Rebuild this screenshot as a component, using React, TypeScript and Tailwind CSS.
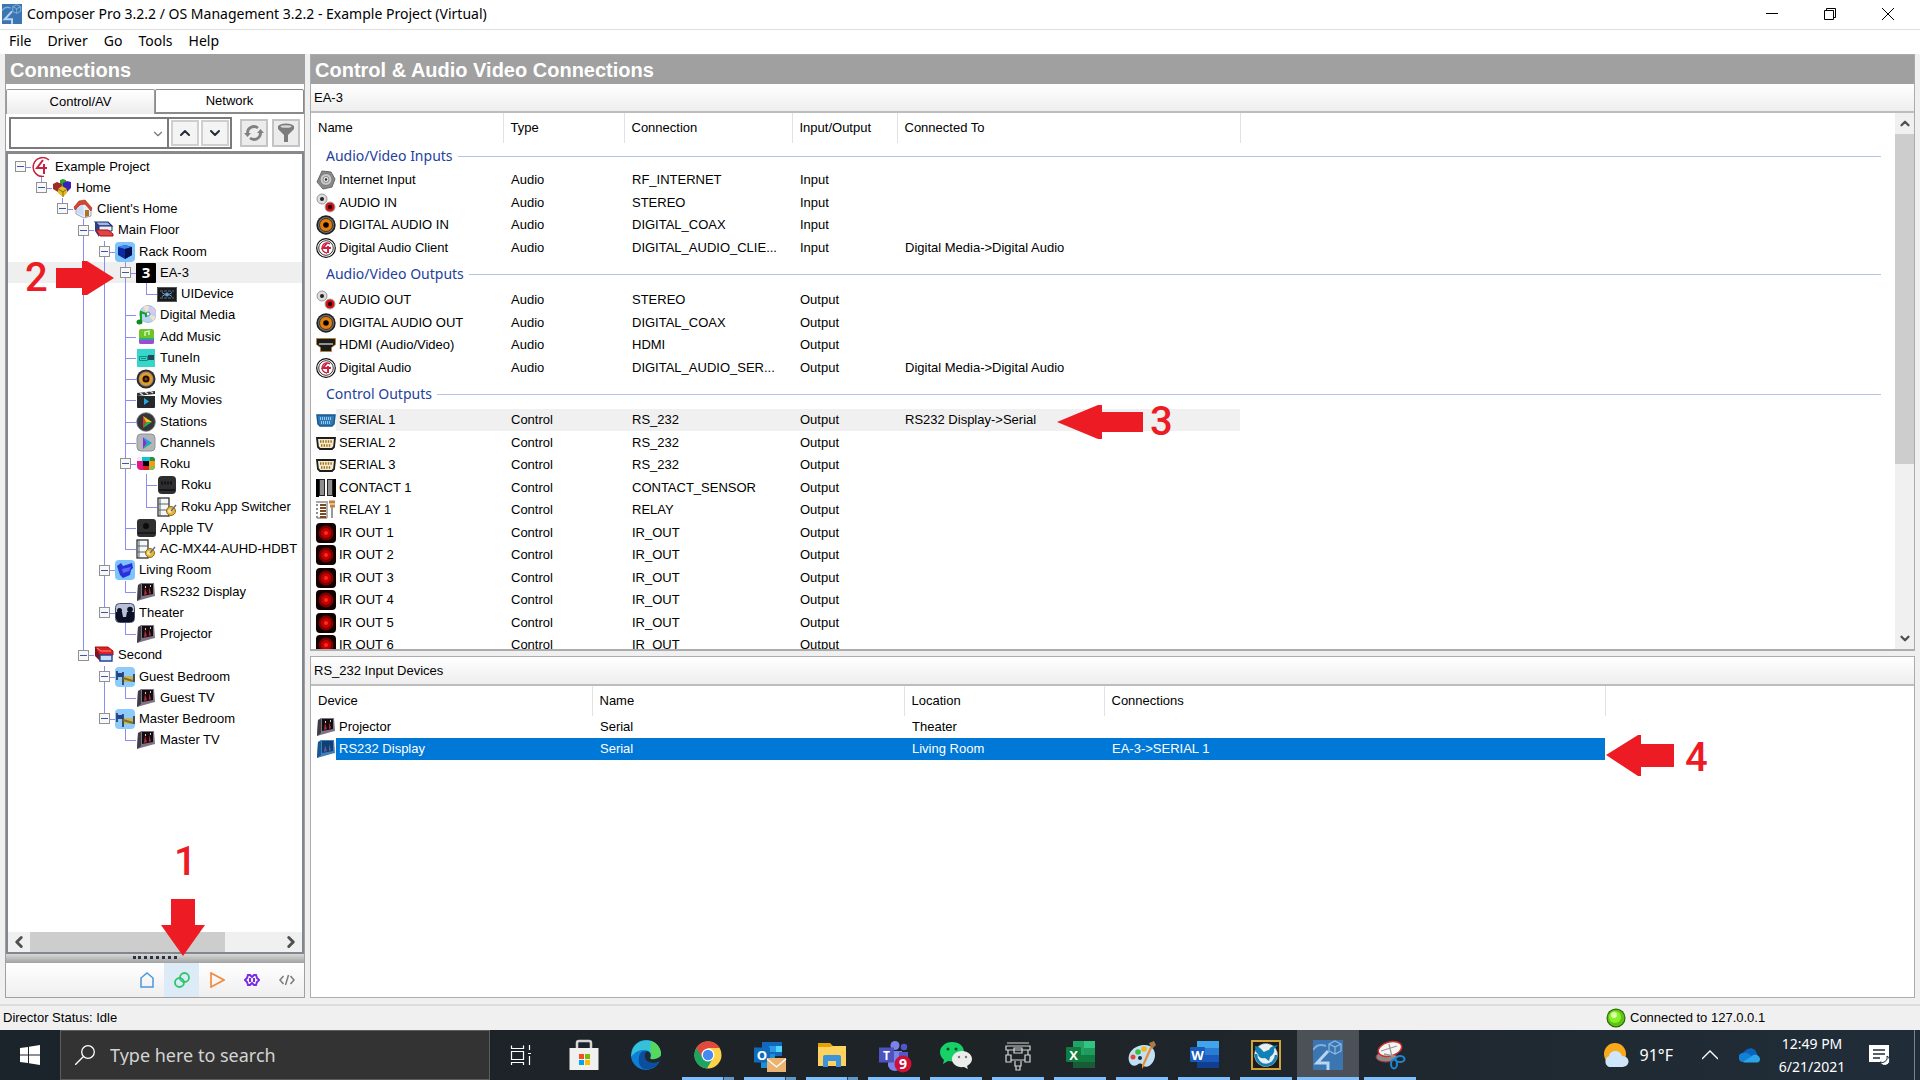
import { useState } from 'react';
import type { ReactNode } from 'react';
import { ChevronDown, ChevronLeft, ChevronRight, ChevronUp } from 'lucide-react';
import clsx from 'clsx';

const icons: Record<string, ReactNode> = {
  control4: (
    <>
      <path d="M18 3A9.500 9.500 0 1 0 13 19.500" fill="none" stroke="#c8213f" strokeWidth="1.500" />
      <path d="M12 3 6 11h7v6M13 7v4h3" fill="none" stroke="#c8213f" strokeWidth="2" />
    </>
  ),
  home: (
    <>
      <path d="m8 2 3-1 3 1v6l-3 2-3-2z" fill="#2f9e2f" />
      <path d="m1 6 4-2 5 2v6l-4 2-5-3z" fill="#9c2b2b" />
      <path d="m11 5 4-2 4 1v6l-4 4-4-3z" fill="#3b20b8" />
      <path d="m6 11 4-3 5 3v4l-4 4-5-4z" fill="#e2bd25" />
      <path d="m6 11 5 3 4-3M11 14v5" fill="none" stroke="#8d6b11" />
    </>
  ),
  house: (
    <>
      <path d="m3 9 6-6 9 7v7l-7 2-8-4z" fill="#e9eef5" stroke="#8a8fa3" strokeWidth=".8" />
      <path d="M1 8 6 2l6-1 7 8-1 3-6-7-5 1-5 5z" fill="#d8452f" stroke="#9b2a1d" strokeWidth=".6" />
      <path d="M4 9l6-3 1 11-7-3z" fill="#c9dcf3" />
      <path d="M12 11h4v6l-4 1z" fill="#b0702c" />
    </>
  ),
  floor: (
    <>
      <path d="M1 2h13l4 4H5z" fill="#9db8e6" stroke="#1c2b66" strokeWidth="1.200" />
      <path d="M5 6h13v5H5z" fill="#e9eefb" stroke="#1c2b66" />
      <path d="M1 2v9l4 6V6z" fill="#2c3f86" />
      <path d="M2 10h12l5 4v2H6z" fill="#e04545" stroke="#a11" />
    </>
  ),
  second: (
    <>
      <path d="M1 2h13l5 4v4H6z" fill="#e02020" stroke="#a11" />
      <path d="m3 3 4 3h10" fill="none" stroke="#ff8d8d" />
      <path d="M1 2v9l5 5v-6z" fill="#7d1424" />
      <path d="M6 10h12v6H6z" fill="#c7dcf5" stroke="#24439a" strokeWidth="1.400" />
    </>
  ),
  rack: (
    <>
      <rect width="20" height="20" rx="4" fill="#7cc4fb" />
      <path d="m3 5 7-2 7 2v8l-7 4-7-4z" fill="#0c2a9e" />
      <path d="m3 5 7 2 7-2-7-2z" fill="#3e82f0" />
      <path d="M10 7v10l7-4V5z" fill="#051150" />
    </>
  ),
  ea3: (
    <>
      <rect width="20" height="20" rx="1" fill="#000" />
      <text x="10" y="15" fontSize="15" fontWeight="700" fill="#fff" textAnchor="middle" fontFamily="Open Sans, sans-serif">3</text>
    </>
  ),
  uidevice: (
    <>
      <rect x=".5" y="3.500" width="19" height="14" fill="#1a1a1c" stroke="#555" />
      <path d="M3 7h14M3 14h14" stroke="#456" strokeWidth="1.500" strokeDasharray="3 1" />
      <path d="M5 8.500 8 10.500 5 12.500M15 8.500 12 10.500l3 2" fill="none" stroke="#68a2d8" />
      <circle cx="10" cy="10.500" r="2" fill="#68a2d8" />
    </>
  ),
  media: (
    <>
      <circle cx="12" cy="9" r="8.500" fill="#b9d4f0" stroke="#8da7c4" strokeWidth=".7" />
      <path d="M12 9 7 2a8 8 0 0 1 6-1zM12 9l8 3-3 4z" fill="#f4e2c9" />
      <path d="M12 9 20 7l-3-5z" fill="#e5c5f0" />
      <circle cx="12" cy="9" r="2" fill="#fff" stroke="#58a" />
      <path d="M5 16V7l5 2v3" fill="none" stroke="#17a02a" strokeWidth="2" />
      <ellipse cx="3.500" cy="17" rx="3" ry="2.500" fill="#0d8a1e" />
    </>
  ),
  addmusic: (
    <>
      <rect x="3" y="2" width="15" height="15" rx="2" fill="#6cc62b" />
      <path d="M3 11h15v2H3z" fill="#2fa59a" />
      <path d="M3 13h15v2a2 2 0 0 1-2 2H5a2 2 0 0 1-2-2z" fill="#9a4fd0" />
      <path d="M9 9V5l4-1v4" fill="none" stroke="#eaffd8" strokeWidth="1.200" />
    </>
  ),
  tunein: (
    <>
      <rect x="1" y="1" width="18" height="18" fill="#36d6cb" />
      <path d="M3.500 8.500h8v4h-8z" fill="none" stroke="#178b87" />
      <path d="M12 7h6v5h-6z" fill="#234b55" />
      <path d="M5 10.500h5" stroke="#178b87" />
    </>
  ),
  speaker: (
    <>
      <circle cx="10" cy="10" r="9.500" fill="#2d2a28" />
      <circle cx="10" cy="10" r="7.500" fill="#8b8680" />
      <circle cx="10" cy="10" r="6.500" fill="#e59a25" />
      <circle cx="10" cy="10" r="3.500" fill="#1d1006" />
      <circle cx="10" cy="10" r="1.500" fill="#6b4a22" />
    </>
  ),
  movies: (
    <>
      <path d="M1 6h18v11a1 1 0 0 1-1 1H2a1 1 0 0 1-1-1z" fill="#26292b" />
      <path d="m1 3 18-2v3L1 6z" fill="#333" />
      <path d="m4 3 3 2m2-3 3 2m2-3 3 2" stroke="#ddd" strokeWidth="1.500" />
      <path d="m8 8 5 3.500L8 15z" fill="#27a7e0" />
    </>
  ),
  stations: (
    <>
      <circle cx="10" cy="10" r="9.300" fill="#33363a" stroke="#777" strokeWidth=".8" />
      <path d="M7 4v12l3-6z" fill="#e8372d" />
      <path d="m7 4 9 6h-6z" fill="#f5c518" />
      <path d="m7 16 9-6h-6z" fill="#27b34a" />
    </>
  ),
  channels: (
    <>
      <rect x="1" y="1" width="18" height="17" rx="4" fill="#b3b5ba" stroke="#909297" />
      <path d="M7 4v12l4-6z" fill="#8430d8" />
      <path d="m7 4 9 6h-5z" fill="#1c9cf0" />
      <path d="m7 16 9-6h-5z" fill="#12b886" />
    </>
  ),
  rokuapp: (
    <>
      <rect x="1" y="3" width="18" height="13" rx="4" fill="#e5188b" />
      <path d="M5 3h9v4H5z" fill="#10c2d6" />
      <path d="M14 3h2a3 3 0 0 1 3 3v1h-5z" fill="#2a8f3f" />
      <path d="M1 7V6a3 3 0 0 1 3-3h2v4z" fill="#f0f0f0" />
      <path d="M7 7h6v5H7z" fill="#000" />
      <path d="M13 7h6v5h-6z" fill="#f39c12" />
      <path d="M7 12h6v4H7z" fill="#e31b23" />
      <path d="M13 12h6a4 4 0 0 1-4 4h-2z" fill="#8ac43f" />
    </>
  ),
  rokubox: (
    <>
      <rect x="1" y="1" width="18" height="18" rx="4" fill="#2e2e30" />
      <path d="M2 15h16" stroke="#161616" strokeWidth="2" />
      <path d="M4 8h12" stroke="#141414" strokeWidth="3" strokeDasharray="2 1" />
    </>
  ),
  appletv: (
    <>
      <rect x="1" y="1" width="19" height="18" rx="3" fill="#303032" />
      <path d="M2 15h17" stroke="#1a1a1a" strokeWidth="2" />
      <circle cx="10" cy="8" r="3" fill="#0c0c0c" />
    </>
  ),
  driver: (
    <>
      <rect x="1" y="1" width="11" height="18" fill="#f5f7fa" stroke="#222" strokeWidth="1.200" />
      <path d="M3 1v18M1 7h11M1 13h11" stroke="#566" />
      <circle cx="14" cy="14" r="4.500" fill="#e3b73a" stroke="#8f6c14" />
      <circle cx="13" cy="14" r="2" fill="#f6e3a4" />
      <path d="m14 14 5-6" stroke="#5d6888" strokeWidth="1.300" />
    </>
  ),
  living: (
    <>
      <rect width="20" height="20" rx="4" fill="#7cc4fb" />
      <path d="m2 6 4-3 2 3 9-3 1 5-2 2-1 5-7 3-3-3z" fill="#2932d8" />
      <path d="m7 9 9-2-2 4-6 2z" fill="#5a6bf7" />
    </>
  ),
  theater: (
    <>
      <rect x=".5" y=".5" width="19" height="19" rx="4" fill="#b9bfd6" stroke="#44506e" />
      <circle cx="4.500" cy="7.500" r="2.500" fill="#0c1024" />
      <circle cx="15" cy="6.500" r="2.800" fill="#0c1024" />
      <path d="M1 16V9h6l1 5h3l1-5h7v8l-2 2H3z" fill="#0c1024" />
    </>
  ),
  bedroom: (
    <>
      <rect width="20" height="20" rx="4" fill="#8ccbfa" />
      <path d="M8 9h10v6H8z" fill="#c6b45c" />
      <path d="M2 4v9M8 5v13M19 7v8" stroke="#26324a" strokeWidth="1.600" />
      <path d="M2 6h6v4H2z" fill="#24408f" />
      <path d="m8 11 10 3" stroke="#7d6f2d" strokeWidth="2" />
    </>
  ),
  display: (
    <>
      <path d="m2 3 3-2h13l1 13-4 1-14 4z" fill="#7d7484" />
      <path d="m2 3 3-1v14l-4 3z" fill="#403b45" />
      <path d="M6 2h11v10L6 14z" fill="#120d10" />
      <path d="m8 13 1-7 2 6zm5-1V5l2 6z" fill="#b32b38" />
      <path d="M9 5h1M14 4h1" stroke="#e8c6b2" strokeWidth="2" />
    </>
  ),
  displaySelected: (
    <>
      <path d="m2 3 3-2h13l1 13-4 1-14 4z" fill="#3f80b8" />
      <path d="m2 3 3-1v14l-4 3z" fill="#1b568f" />
      <path d="M6 2h11v10L6 14z" fill="#0f3f75" />
      <path d="m8 13 1-7 2 6zm5-1V5l2 6z" fill="#5a5f9c" />
    </>
  ),
  internet: (
    <>
      <path d="m6 1 9 1 4 7-3 8-9 2-6-7z" fill="#8b8b8b" stroke="#666" />
      <circle cx="10" cy="9.500" r="6" fill="#c9c9c9" stroke="#777" />
      <circle cx="10" cy="9.500" r="3" fill="#eee" stroke="#888" />
      <circle cx="10" cy="9.500" r="1.200" fill="#222" />
    </>
  ),
  rca: (
    <>
      <circle cx="6" cy="6" r="5" fill="#dcdcdc" stroke="#999" />
      <circle cx="6" cy="6" r="2" fill="#222" />
      <circle cx="14" cy="14" r="5" fill="#d01212" stroke="#aaa" />
      <circle cx="14" cy="14" r="2.200" fill="#300" />
    </>
  ),
  coax: (
    <>
      <circle cx="10" cy="10" r="9.700" fill="#1f1f1f" />
      <circle cx="10" cy="10" r="8" fill="#747474" />
      <circle cx="10" cy="10" r="6.500" fill="#e37f0a" stroke="#432" />
      <circle cx="10" cy="10" r="2.800" fill="#000" />
    </>
  ),
  digital: (
    <>
      <circle cx="10" cy="10" r="9.300" fill="#fff" stroke="#111" strokeWidth="1.200" />
      <circle cx="10" cy="10" r="7.300" fill="#fff" stroke="#222" strokeWidth=".9" />
      <path d="M14 6a5 5 0 1 0-3 9" fill="none" stroke="#cc1f40" strokeWidth="1.300" />
      <path d="m11 5-4 5h5v5M12 8v2h3" fill="none" stroke="#cc1f40" strokeWidth="1.900" />
    </>
  ),
  hdmi: (
    <>
      <path d="M.500 3.500h19v6l-4 3v4h-11v-4l-4-3z" fill="#1b1b1b" stroke="#b4852c" strokeWidth=".8" />
      <path d="M3 9h14" stroke="#bbb" strokeWidth="1.500" />
    </>
  ),
  serialSelected: (
    <>
      <path d="M1 5h18l-1 9-2 2H4l-2-2z" fill="#2b7ab8" stroke="#1a578c" strokeWidth="1.500" />
      <path d="M4 8.500h12M5 12.500h10" stroke="#9cc8ea" strokeWidth="3" strokeDasharray="1 1" />
    </>
  ),
  serial: (
    <>
      <path d="M1 5h18l-1 9-2 2H4l-2-2z" fill="#f4ead2" stroke="#1d1d1d" strokeWidth="1.800" />
      <path d="M4 8.500h12M5 12.500h10" stroke="#a56f13" strokeWidth="2.500" strokeDasharray="1.400 1.200" />
    </>
  ),
  contact: (
    <>
      <path d="M0 1h3v18H0zM17 1h3v18h-3z" fill="#000" />
      <rect x="3.500" y="1.500" width="5" height="16" fill="#8e8e8e" stroke="#222" />
      <rect x="11.500" y="1.500" width="5" height="16" fill="#8e8e8e" stroke="#222" />
    </>
  ),
  relay: (
    <>
      <path d="M0 2h12M1 18h10M11 3v15" stroke="#8f8f8f" strokeWidth="1.400" />
      <path d="M1 4v14" stroke="#8f8f8f" strokeWidth="2" strokeDasharray="2 2" />
      <path d="M7 4v14" stroke="#7c4a21" strokeWidth="6" strokeDasharray="2 1" />
      <path d="M13 2h6M14 6h5" stroke="#c87f3c" strokeWidth="3" />
      <path d="M16 7v11" stroke="#999" strokeWidth="2" />
    </>
  ),
  ir: (
    <>
      <rect width="20" height="20" rx="4" fill="#120000" />
      <circle cx="10" cy="10" r="7.500" fill="#7d0000" />
      <circle cx="10" cy="10" r="5" fill="#c40000" />
      <circle cx="10" cy="10" r="2" fill="#ff2a1c" />
    </>
  ),
};

const Icon = ({ name }: { name: string }) => (
  <svg viewBox="0 0 20 20" className="size-5 shrink-0" aria-hidden="true">
    {icons[name]}
  </svg>
);

interface TreeNode {
  label: string;
  icon: string;
  children?: TreeNode[];
}

const tree: TreeNode = {
  label: 'Example Project',
  icon: 'control4',
  children: [
    {
      label: 'Home',
      icon: 'home',
      children: [
        {
          label: "Client's Home",
          icon: 'house',
          children: [
            {
              label: 'Main Floor',
              icon: 'floor',
              children: [
                {
                  label: 'Rack Room',
                  icon: 'rack',
                  children: [
                    { label: 'EA-3', icon: 'ea3', children: [{ label: 'UIDevice', icon: 'uidevice' }] },
                    { label: 'Digital Media', icon: 'media' },
                    { label: 'Add Music', icon: 'addmusic' },
                    { label: 'TuneIn', icon: 'tunein' },
                    { label: 'My Music', icon: 'speaker' },
                    { label: 'My Movies', icon: 'movies' },
                    { label: 'Stations', icon: 'stations' },
                    { label: 'Channels', icon: 'channels' },
                    {
                      label: 'Roku',
                      icon: 'rokuapp',
                      children: [
                        { label: 'Roku', icon: 'rokubox' },
                        { label: 'Roku App Switcher', icon: 'driver' },
                      ],
                    },
                    { label: 'Apple TV', icon: 'appletv' },
                    { label: 'AC-MX44-AUHD-HDBT', icon: 'driver' },
                  ],
                },
                { label: 'Living Room', icon: 'living', children: [{ label: 'RS232 Display', icon: 'display' }] },
                { label: 'Theater', icon: 'theater', children: [{ label: 'Projector', icon: 'display' }] },
              ],
            },
            {
              label: 'Second',
              icon: 'second',
              children: [
                { label: 'Guest Bedroom', icon: 'bedroom', children: [{ label: 'Guest TV', icon: 'display' }] },
                { label: 'Master Bedroom', icon: 'bedroom', children: [{ label: 'Master TV', icon: 'display' }] },
              ],
            },
          ],
        },
      ],
    },
  ],
};

interface TreeRow {
  node: TreeNode;
  guides: boolean[];
  last: boolean;
}

// guides[i] is true when the ancestor on level i has more siblings below
const flatten = (node: TreeNode, guides: boolean[], last: boolean): TreeRow[] => [
  { node, guides, last },
  ...(node.children ?? []).flatMap((child, i, all) => flatten(child, [...guides, !last], i === all.length - 1)),
];

const treeRows = flatten(tree, [], true);

const Line = ({ className }: { className: string }) => <span className={clsx('absolute bg-[#8c8cf5]', className)} />;

const TreeItem = ({ row }: { row: TreeRow }) => {
  const { node, guides, last } = row;
  return (
    <li
      role="treeitem"
      aria-level={guides.length + 1}
      className={clsx('flex h-[21px] items-center whitespace-nowrap pl-[2px] nth-[4n]:h-[22px]', node.label === 'EA-3' && 'bg-[#efefef]')}
    >
      {guides.map((open, i) => (
        <span key={i} className="relative h-full w-[21px] shrink-0">
          {open && <Line className="left-2.5 top-0 h-full w-px" />}
        </span>
      ))}
      <span className="relative flex h-full w-[21px] shrink-0 items-center justify-center">
        {guides.length > 0 && <Line className={clsx('left-2.5 top-0 w-px', last ? 'h-1/2' : 'h-full')} />}
        <Line className="left-2.5 top-1/2 h-px w-[11px]" />
        {node.children && (
          <button aria-label={'Collapse ' + node.label} className="relative flex size-[11px] items-center justify-center border border-[#919191] bg-[#f8f8f8]">
            <span className="h-px w-[7px] bg-[#3c57a8]" />
          </button>
        )}
      </span>
      <Icon name={node.icon} />
      <span className="pl-1">{node.label}</span>
    </li>
  );
};

const SidebarTools = () => (
  <div className="flex h-[39px] shrink-0 items-center gap-2 border-b-2 border-[#8a8a8a] bg-white pl-[3px]">
    <div className="flex h-8 items-center gap-[2px] border-2 border-[#7a7a7a] pr-px">
      <div className="relative h-full w-[158px] border-r-2 border-[#7a7a7a]">
        <select aria-label="Find item" className="h-full w-full appearance-none bg-white" />
        <ChevronDown className="pointer-events-none absolute right-[2px] top-2 size-[14px] text-[#777]" />
      </div>
      <button aria-label="Previous" className="flex h-[26px] w-7 items-center justify-center border-2 border-[#cfcfcf] bg-[#f4f4f4]">
        <ChevronUp className="size-4 text-[#222b3a]" strokeWidth={3} />
      </button>
      <button aria-label="Next" className="flex h-[26px] w-7 items-center justify-center border-2 border-[#cfcfcf] bg-[#f4f4f4]">
        <ChevronDown className="size-4 text-[#222b3a]" strokeWidth={3} />
      </button>
    </div>
    <div className="flex gap-1">
      <button aria-label="Refresh" className="flex h-7 w-7 items-center justify-center border-2 border-[#c4c4c4] bg-[#ececec]">
        <svg viewBox="0 0 20 18" className="w-5" fill="none" stroke="#808080" strokeWidth="2.800">
          <path d="M3.500 9.500A6.500 6.500 0 0 1 14 4M16.500 8.500A6.500 6.500 0 0 1 6 14" />
          <path d="M0 9h7l-3.500 4zM20 9h-7l3.500-4z" fill="#808080" stroke="none" />
        </svg>
      </button>
      <button aria-label="Filter" className="flex h-7 w-7 items-center justify-center border-2 border-[#c4c4c4] bg-[#ececec]">
        <svg viewBox="0 0 18 20" className="w-[18px]" fill="#7c7c7c">
          <path d="M1 3v3l6 6v7h4v-7l6-6V3z" />
          <ellipse cx="9" cy="3.500" rx="8" ry="3" />
          <ellipse cx="9" cy="3.500" rx="5.500" ry="1.300" fill="#d8d8d8" />
        </svg>
      </button>
    </div>
  </div>
);

const Sidebar = () => (
  <aside className="flex w-[300px] shrink-0 flex-col border border-[#a0a0a0] bg-white">
    <h2 className="flex h-[29px] shrink-0 items-center bg-[#a0a0a0] pl-1 text-xl font-bold text-white">Connections</h2>
    <div className="mt-[5px] flex h-[25px] shrink-0">
      <button className="flex-1 rounded-t-xs border border-b-0 border-[#9a9a9a] bg-linear-to-b from-white to-[#ececec]">Control/AV</button>
      <button className="flex-1 rounded-t-xs border border-b-2 border-[#8a8a8a] bg-white">Network</button>
    </div>
    <SidebarTools />
    <div className="flex min-h-0 flex-1 flex-col border-2 border-t-1 border-[#82878f] pt-[2px]">
      <ul role="tree" aria-label="Project" className="min-h-0 flex-1 overflow-hidden">
        {treeRows.map((row, i) => (
          <TreeItem key={i} row={row} />
        ))}
      </ul>
      <div className="flex h-5 items-center bg-[#f0f0f0]">
        <ChevronLeft className="size-[22px] p-[2px] text-[#505050]" strokeWidth={4} />
        <div className="h-full w-[195px] bg-[#cdcdcd]" />
        <ChevronRight className="ml-auto size-[22px] p-[2px] text-[#505050]" strokeWidth={4} />
      </div>
    </div>
    <div className="flex h-[9px] shrink-0 justify-center bg-linear-to-b from-[#d8d8d8] to-[#a2a2a2] pt-[2px]">
      <span className="h-[3px] w-11 border-t-3 border-dotted border-[#2a3240]" />
    </div>
    <div className="flex h-[34px] shrink-0 justify-end bg-linear-to-b from-white to-[#efefef]">
      <button aria-label="System Design" className="flex w-[35px] items-center justify-center">
        <svg viewBox="0 0 16 16" className="size-4" fill="none" stroke="#4f95dc" strokeWidth="1.500">
          <path d="M2 15V6l6-5 6 5v9z" />
        </svg>
      </button>
      <button aria-label="Connections" className="flex w-[35px] items-center justify-center bg-[#dcebf5]">
        <svg viewBox="0 0 16 16" className="size-4" fill="none" stroke="#2fc56b" strokeWidth="1.800">
          <circle cx="10.500" cy="5.500" r="4.500" />
          <circle cx="5.500" cy="10.500" r="4.500" />
        </svg>
      </button>
      <button aria-label="Media" className="flex w-[35px] items-center justify-center">
        <svg viewBox="0 0 16 16" className="size-4" fill="none" stroke="#f58a3c" strokeWidth="1.700">
          <path d="M2 1v14l13-7z" />
        </svg>
      </button>
      <button aria-label="Agents" className="flex w-[35px] items-center justify-center">
        <svg viewBox="0 0 16 16" className="size-4" fill="none" stroke="#7a2bea" strokeWidth="2">
          <path d="M4 3h2l2 2 2-2h2l1 3 2 2-2 2-1 3h-2l-2-2-2 2H4l-1-3-2-2 2-2zM6 6v4M10 6v4" />
        </svg>
      </button>
      <button aria-label="Programming" className="flex w-[35px] items-center justify-center">
        <svg viewBox="0 0 16 16" className="size-4" fill="none" stroke="#7b7b7b" strokeWidth="1.500">
          <path d="M4.500 4 1 8l3.500 4M11.500 4 15 8l-3.500 4M9.500 3l-3 10" />
        </svg>
      </button>
    </div>
  </aside>
);

interface Connection {
  name: string;
  icon: string;
  type: string;
  connection: string;
  io: string;
  to?: string;
}

const groups: { title: string; rows: Connection[] }[] = [
  {
    title: 'Audio/Video Inputs',
    rows: [
      { name: 'Internet Input', icon: 'internet', type: 'Audio', connection: 'RF_INTERNET', io: 'Input' },
      { name: 'AUDIO IN', icon: 'rca', type: 'Audio', connection: 'STEREO', io: 'Input' },
      { name: 'DIGITAL AUDIO IN', icon: 'coax', type: 'Audio', connection: 'DIGITAL_COAX', io: 'Input' },
      { name: 'Digital Audio Client', icon: 'digital', type: 'Audio', connection: 'DIGITAL_AUDIO_CLIE...', io: 'Input', to: 'Digital Media->Digital Audio' },
    ],
  },
  {
    title: 'Audio/Video Outputs',
    rows: [
      { name: 'AUDIO OUT', icon: 'rca', type: 'Audio', connection: 'STEREO', io: 'Output' },
      { name: 'DIGITAL AUDIO OUT', icon: 'coax', type: 'Audio', connection: 'DIGITAL_COAX', io: 'Output' },
      { name: 'HDMI (Audio/Video)', icon: 'hdmi', type: 'Audio', connection: 'HDMI', io: 'Output' },
      { name: 'Digital Audio', icon: 'digital', type: 'Audio', connection: 'DIGITAL_AUDIO_SER...', io: 'Output', to: 'Digital Media->Digital Audio' },
    ],
  },
  {
    title: 'Control Outputs',
    rows: [
      { name: 'SERIAL 1', icon: 'serialSelected', type: 'Control', connection: 'RS_232', io: 'Output', to: 'RS232 Display->Serial' },
      { name: 'SERIAL 2', icon: 'serial', type: 'Control', connection: 'RS_232', io: 'Output' },
      { name: 'SERIAL 3', icon: 'serial', type: 'Control', connection: 'RS_232', io: 'Output' },
      { name: 'CONTACT 1', icon: 'contact', type: 'Control', connection: 'CONTACT_SENSOR', io: 'Output' },
      { name: 'RELAY 1', icon: 'relay', type: 'Control', connection: 'RELAY', io: 'Output' },
      ...[1, 2, 3, 4, 5, 6].map((n) => ({ name: 'IR OUT ' + n, icon: 'ir', type: 'Control', connection: 'IR_OUT', io: 'Output' })),
    ],
  },
];

const devices = [
  { name: 'Projector', icon: 'display', input: 'Serial', location: 'Theater', to: '' },
  { name: 'RS232 Display', icon: 'displaySelected', input: 'Serial', location: 'Living Room', to: 'EA-3->SERIAL 1' },
];

const HeaderRow = ({ titles }: { titles: string[] }) => (
  <thead>
    <tr className="h-[30px]">
      {titles.map((title) => (
        <th key={title} className="border-r border-[#e2e2e2] px-[7px] text-left font-normal">
          {title}
        </th>
      ))}
      <td />
    </tr>
  </thead>
);

const ConnectionsTable = () => (
  <table className="w-full table-fixed whitespace-nowrap">
    <colgroup>
      <col className="w-[192px]" />
      <col className="w-[121px]" />
      <col className="w-[168px]" />
      <col className="w-[105px]" />
      <col className="w-[343px]" />
      <col />
    </colgroup>
    <HeaderRow titles={['Name', 'Type', 'Connection', 'Input/Output', 'Connected To']} />
    {groups.map((group, i) => (
      <tbody key={group.title}>
        <tr className={i === 0 ? 'h-[26px]' : 'h-[30px]'}>
          <th colSpan={6} className="pl-[15px] pr-[14px] font-normal">
            <div className="flex items-center gap-[5px] font-['Noto_Sans',sans-serif] text-sm text-[#1e419c]">
              {group.title}
              <span className="h-px flex-1 bg-[#b4c3e6]" />
            </div>
          </th>
        </tr>
        {group.rows.map((row) => {
          const selected = row.name === 'SERIAL 1';
          return (
            <tr key={row.name} className={clsx('h-[22px] odd:h-[23px]', selected && 'bg-[#f0f0f0]')}>
              <td className={clsx('p-0', selected && 'bg-white')}>
                <div className="flex items-center pl-[5px]">
                  <Icon name={row.icon} />
                  <span className={clsx('flex-1 pl-[3px]', selected && 'bg-[#f0f0f0] leading-[22px]')}>{row.name}</span>
                </div>
              </td>
              <td className="px-2">{row.type}</td>
              <td className="px-2">{row.connection}</td>
              <td className="px-2">{row.io}</td>
              <td className="px-2">{row.to}</td>
              <td className="bg-white" />
            </tr>
          );
        })}
      </tbody>
    ))}
  </table>
);

const DevicesTable = () => (
  <table className="w-full table-fixed whitespace-nowrap">
    <colgroup>
      <col className="w-[281px]" />
      <col className="w-[312px]" />
      <col className="w-[200px]" />
      <col className="w-[501px]" />
      <col />
    </colgroup>
    <HeaderRow titles={['Device', 'Name', 'Location', 'Connections']} />
    <tbody>
      {devices.map((device) => {
        const selected = device.to !== '';
        const cell = selected ? 'bg-[#0078d7] px-2 text-white' : 'px-2';
        return (
          <tr key={device.name} className="h-[22px]">
            <td className="p-0">
              <div className="flex items-center pl-[5px]">
                <Icon name={device.icon} />
                <span className={clsx('flex-1 pl-[3px] leading-[22px]', selected && 'bg-[#0078d7] text-white')}>{device.name}</span>
              </div>
            </td>
            <td className={cell}>{device.input}</td>
            <td className={cell}>{device.location}</td>
            <td className={cell}>{device.to}</td>
            <td />
          </tr>
        );
      })}
    </tbody>
  </table>
);

const PanelTitle = ({ children }: { children: ReactNode }) => (
  <h3 className="flex h-[29px] shrink-0 items-center border-b-2 border-[#bdbdbd] bg-linear-to-b from-white to-[#eeeeee] pl-[3px]">{children}</h3>
);

const Workspace = () => (
  <main className="flex min-w-0 flex-1 flex-col">
    <section className="flex min-h-0 flex-1 flex-col border border-b-2 border-[#acacac] bg-white">
      <h2 className="flex h-[29px] shrink-0 items-center bg-[#a0a0a0] pl-1 text-xl font-bold text-white">Control &amp; Audio Video Connections</h2>
      <PanelTitle>EA-3</PanelTitle>
      <div className="flex min-h-0 flex-1">
        <div className="min-w-0 flex-1 overflow-hidden">
          <ConnectionsTable />
        </div>
        <div className="flex w-[19px] flex-col items-center bg-[#f0f0f0]">
          <ChevronUp className="h-[21px] w-[14px] shrink-0 text-[#505050]" strokeWidth={4} />
          <div className="h-[330px] w-full bg-[#cdcdcd]" />
          <ChevronDown className="mt-auto h-[21px] w-[14px] shrink-0 text-[#505050]" strokeWidth={4} />
        </div>
      </div>
    </section>
    <section className="mt-[5px] flex h-[342px] shrink-0 flex-col border border-[#acacac] bg-white">
      <PanelTitle>RS_232 Input Devices</PanelTitle>
      <DevicesTable />
    </section>
  </main>
);

const ComposerLogo = ({ className }: { className: string }) => (
  <svg viewBox="0 0 30 30" className={className} aria-hidden="true">
    <path d="M0 0h30v30H0z" fill="#3b76b3" />
    <path d="M0 10c3-5 8-6 13-4" fill="none" stroke="#7fb0de" strokeWidth="2" />
    <path d="M15 11 4 23h11v7" fill="none" stroke="#b5d5f2" strokeWidth="3" />
    <path d="m22 1 6 3v7l-6 3-6-3V4zM16 4l6 3 6-3M22 7v7" fill="none" stroke="#8fbbe2" strokeWidth="1.200" />
  </svg>
);

const TitleBar = () => (
  <header className="flex h-[30px] shrink-0 items-center border-b border-[#dedede] bg-white pb-px pl-[2px] font-['Noto_Sans',sans-serif] text-sm">
    <ComposerLogo className="size-5" />
    <h1 className="flex-1 pl-[5px]">Composer Pro 3.2.2 / OS Management 3.2.2 - Example Project (Virtual)</h1>
    <div className="flex pr-[3px]">
      <button aria-label="Minimize" className="flex w-[58px] justify-center">
        <svg viewBox="0 0 12 12" className="size-3" stroke="#000"><path d="M0 5.500h12" /></svg>
      </button>
      <button aria-label="Restore" className="flex w-[58px] justify-center">
        <svg viewBox="0 0 12 12" className="size-3" fill="none" stroke="#000"><path d="M.5 2.500h9v9h-9zM2.500 2.500v-2h9v9h-2" /></svg>
      </button>
      <button aria-label="Close" className="flex w-[58px] justify-center">
        <svg viewBox="0 0 12 12" className="size-3" stroke="#000"><path d="m0 0 12 12M12 0 0 12" /></svg>
      </button>
    </div>
  </header>
);

const MenuBar = () => (
  <nav className="flex h-6 shrink-0 items-center gap-4 bg-white pb-[2px] pl-[9px] font-['Noto_Sans',sans-serif] text-sm">
    <button>File</button>
    <button>Driver</button>
    <button>Go</button>
    <button>Tools</button>
    <button>Help</button>
  </nav>
);

const StatusBar = () => (
  <footer className="flex h-[26px] shrink-0 items-center border-t-2 border-[#dcdcdc] pl-[3px]">
    <span className="flex-1">Director Status: Idle</span>
    <span className="flex w-[314px] items-center gap-1">
      <svg viewBox="0 0 20 20" className="size-5" aria-hidden="true">
        <circle cx="10" cy="10" r="9.500" fill="#225c08" />
        <circle cx="10" cy="10" r="8.500" fill="#5bc414" />
        <circle cx="9" cy="9" r="6" fill="#8bf02c" />
        <circle cx="8" cy="7" r="3" fill="#dcffa8" />
      </svg>
      Connected to 127.0.0.1
    </span>
  </footer>
);

const tasks: { label: string; state?: 'open' | 'stacked' | 'active'; art: ReactNode }[] = [
  {
    label: 'Task View',
    art: (
      <path d="M4.500 9V5.500M4.500 8.500h12M16.500 9V5.500M4.500 11.500h12v8h-12zM4.500 25v-3M4.500 22.500h12M16.500 25v-3M22.500 5v5M22.500 16v9M21 13.500h3" fill="none" stroke="#fff" strokeWidth="1.200" />
    ),
  },
  {
    label: 'Microsoft Store',
    art: (
      <>
        <path d="M8 9V3q0-2 2-2h10q2 0 2 2v6" fill="none" stroke="#d5d5d5" strokeWidth="2.500" />
        <path d="M.500 8h29v22H.500z" fill="#f0f0f0" />
        <path d="M10 14h5v5h-5z" fill="#f25022" />
        <path d="M16 14h5v5h-5z" fill="#7fba00" />
        <path d="M10 20h5v5h-5z" fill="#00a4ef" />
        <path d="M16 20h5v5h-5z" fill="#ffb900" />
      </>
    ),
  },
  {
    label: 'Edge',
    art: (
      <>
        <circle cx="15" cy="15" r="15" fill="#0f7fd6" />
        <path d="M1 11C5-3 27-4 30 13c0 6-6 8-11 6 2-4 0-9-7-9-5 0-9 3-12 7z" fill="#35c1d8" />
        <path d="M20 1c7 2 10 8 10 13-1 5-7 7-11 5 2-3 2-6 0-8z" fill="#56d85c" />
        <path d="M8 18c0-5 4-8 8-7-2 1-3 5-1 8 3 4 9 5 13 3-4 7-12 9-17 6-3-3-4-6-3-10z" fill="#0b4f9e" />
        <path d="M16 11c-3 2-3 7 0 10 3 2 8 3 14 0v-5c-5 4-10 4-11 2 2-3 0-7-3-7z" fill="#1e2a33" />
      </>
    ),
  },
  {
    label: 'Chrome',
    state: 'stacked',
    art: (
      <>
        <circle cx="15" cy="15" r="13.500" fill="#fdd24a" />
        <path d="M3.300 8A13.500 13.500 0 0 1 26.700 8H15l-6 11z" fill="#df4a3c" />
        <path d="M3.300 8A13.500 13.500 0 0 0 14 28.500L20 18l-10 0z" fill="#1da362" />
        <circle cx="15" cy="15" r="6.500" fill="#fff" />
        <circle cx="15" cy="15" r="5.200" fill="#4688f4" />
      </>
    ),
  },
  {
    label: 'Outlook',
    state: 'stacked',
    art: (
      <>
        <path d="M7 2h20v14H7z" fill="#1268bd" />
        <path d="M14 6h7v6h-7z" fill="#2b9be8" />
        <path d="M21 6h6v6h-6z" fill="#52d6fd" />
        <path d="M6 14h14v14H6z" fill="#1d8fd6" />
        <path d="M-1 7.500h16v15H-1z" fill="#0f6cbd" />
        <text x="7" y="20" fontSize="13" fontWeight="700" fill="#fff" textAnchor="middle" fontFamily="Open Sans, sans-serif">O</text>
        <path d="M12 18h19v14H12z" fill="#eab371" />
        <path d="m12 19 9.500 8 9.500-8" fill="none" stroke="#fff" strokeWidth="1.300" />
      </>
    ),
  },
  {
    label: 'File Explorer',
    state: 'stacked',
    art: (
      <>
        <path d="M1 3h12l3 3h13v4H1z" fill="#e3a206" />
        <path d="M1 7h12l3-1h13v20H1z" fill="#fdd25e" />
        <path d="M6 27V17q0-2 2-2h14q2 0 2 2v10h-5v-6h-8v6z" fill="#3b93db" />
      </>
    ),
  },
  {
    label: 'Teams',
    state: 'open',
    art: (
      <>
        <circle cx="16" cy="5.500" r="4.500" fill="#7b83eb" />
        <circle cx="25" cy="7" r="3.200" fill="#5059c9" />
        <path d="M9 11h14v10a7 7 0 0 1-14 5z" fill="#7b83eb" />
        <path d="M20 12h9v6H20z" fill="#5059c9" />
        <path d="M0 7.500h15v15H0z" fill="#4b53bc" />
        <text x="7.500" y="20" fontSize="12" fontWeight="700" fill="#fff" textAnchor="middle" fontFamily="Open Sans, sans-serif">T</text>
        <circle cx="24" cy="24" r="8.500" fill="#cf1036" />
        <text x="24" y="29" fontSize="14" fontWeight="700" fill="#fff" textAnchor="middle" fontFamily="Open Sans, sans-serif">9</text>
      </>
    ),
  },
  {
    label: 'WeChat',
    state: 'open',
    art: (
      <>
        <path d="M11 2C4 2-1 7-1 12c0 4 2 6 4 8l-1 4 5-3c11 2 16-3 16-9S18 2 11 2z" fill="#16d068" />
        <circle cx="7" cy="9" r="1.500" fill="#0a4f29" />
        <circle cx="15" cy="9" r="1.500" fill="#0a4f29" />
        <path d="M21 11c-6 0-10 4-10 8 0 5 5 9 12 8l4 2-1-3c3-2 5-4 5-7 0-4-4-8-10-8z" fill="#ececec" />
        <circle cx="18" cy="17" r="1.200" fill="#777" />
        <circle cx="25" cy="17" r="1.200" fill="#777" />
      </>
    ),
  },
  {
    label: 'Serial Tool',
    state: 'open',
    art: (
      <path d="M4 3h22M3 6h24v4H3zM5 10v5M25 10v5M11 8h8v5h-8zM3 15h5v7H3zM22 15h5v7h-5zM8 20h14M12 21v5h6v-5M13 26v4h4v-4" fill="none" stroke="#d6d6d6" strokeWidth="1.200" />
    ),
  },
  {
    label: 'Excel',
    state: 'open',
    art: (
      <>
        <path d="M8 1h11v27H8z" fill="#21a366" />
        <path d="M19 1h11v7H19z" fill="#33c481" />
        <path d="M19 8h11v7H19z" fill="#1f9b60" />
        <path d="M8 15h22v7H8z" fill="#107c41" />
        <path d="M8 22h22v6H8z" fill="#185c37" />
        <rect x="1" y="7" width="15" height="15" rx="1" fill="#107c41" />
        <text x="8.500" y="19.500" fontSize="13" fontWeight="700" fill="#fff" textAnchor="middle" fontFamily="Open Sans, sans-serif">X</text>
      </>
    ),
  },
  {
    label: 'Paint',
    state: 'open',
    art: (
      <>
        <path d="M18 5C8 5 0 12 2 21c1 4 5 6 8 4s5-2 6 1c6 3 12-4 12-11 0-6-4-10-10-10z" fill="#bfe1f5" />
        <circle cx="6" cy="17" r="2.500" fill="#e8442f" />
        <circle cx="11" cy="12" r="2.800" fill="#3dba42" />
        <circle cx="17" cy="9" r="2.800" fill="#f5b51d" />
        <circle cx="13" cy="18" r="2" fill="#1f2b33" />
        <path d="M25 8 17 26l-2 3v-4l8-18z" fill="#ee8a31" />
        <path d="m22 3 5-2 2 4-4 4z" fill="#a97a4b" />
      </>
    ),
  },
  {
    label: 'Word',
    state: 'open',
    art: (
      <>
        <path d="M8 1h22v7H8z" fill="#41a5ee" />
        <path d="M8 8h22v7H8z" fill="#2b7cd3" />
        <path d="M8 15h22v7H8z" fill="#185abd" />
        <path d="M8 22h22v6H8z" fill="#103f91" />
        <rect x="1" y="7" width="15" height="15" rx="1" fill="#185abd" />
        <text x="8.500" y="19.500" fontSize="13" fontWeight="700" fill="#fff" textAnchor="middle" fontFamily="Open Sans, sans-serif">W</text>
      </>
    ),
  },
  {
    label: 'Bird Viewer',
    state: 'open',
    art: (
      <>
        <path d="M1 1h28v28H1z" fill="#1c1c1c" stroke="#cfa23a" strokeWidth="2" />
        <circle cx="15" cy="15" r="11.500" fill="#e9eef0" stroke="#888" strokeDasharray="2 1" />
        <path d="M5 14c0 7 5 11 10 11s10-4 10-10" fill="none" stroke="#1180b8" strokeWidth="2.500" />
        <path d="M4 6c4 0 6 3 9 6 2-1 3-2 5-2 1-3 4-4 9-5l-4 4c1 3-1 6-4 8l-1 4-4-3c-4 1-7-1-7-4-2-1-3-4-3-8z" fill="#1180b8" />
      </>
    ),
  },
  { label: 'Composer Pro', state: 'active', art: null },
  {
    label: 'Snipping Tool',
    state: 'open',
    art: (
      <>
        <ellipse cx="11" cy="17" rx="10" ry="5" fill="#8a8a8a" stroke="#a33" />
        <ellipse cx="15" cy="9" rx="12" ry="7" fill="#f5f5f5" stroke="#d32f2f" strokeWidth="1.400" transform="rotate(-15 15 9)" />
        <path d="M6 11 22 6M14 4l3 13M9 14l14 3" stroke="#999" strokeWidth="1.300" />
        <ellipse cx="19" cy="24" rx="3" ry="4.500" fill="none" stroke="#1c86d1" strokeWidth="2" />
        <ellipse cx="25" cy="19" rx="4.500" ry="3" fill="none" stroke="#1c86d1" strokeWidth="2" />
      </>
    ),
  },
];

const Taskbar = () => {
  const [query, setQuery] = useState('');
  return (
    <div className="flex h-[50px] shrink-0 bg-linear-to-r from-[#1b232b] via-[#1e2326] to-[#202d39] font-['Noto_Sans',sans-serif] text-white">
      <button aria-label="Start" className="flex w-[60px] items-center justify-center">
        <svg viewBox="0 0 20 20" className="size-5" fill="#fff"><path d="M0 3 8 2v7.500H0zM9 1.800 20 0v9.500H9zM0 10.500h8V18l-8-1zM9 10.500h11V20L9 18.200z" /></svg>
      </button>
      <label className="flex w-[430px] items-center gap-[15px] border border-[#5c5c5c] bg-[#333333] pl-[14px]">
        <svg viewBox="0 0 20 20" className="size-5" fill="none" stroke="#fff" strokeWidth="1.300">
          <circle cx="13" cy="7" r="6.300" />
          <path d="M8.500 11.500 0 20" />
        </svg>
        <input
          aria-label="Search"
          value={query}
          onChange={(e) => setQuery(e.target.value)}
          placeholder="Type here to search"
          className="min-w-0 flex-1 text-[18px] placeholder:text-[#d4d4d4]"
        />
      </label>
      <div className="flex flex-1 pl-px">
        {tasks.map((task) => (
          <button key={task.label} aria-label={task.label} className={clsx('relative flex w-[62px] items-center justify-center', task.state === 'active' && 'bg-[#4b5156]')}>
            {task.art ? (
              <svg viewBox="0 0 30 30" className="size-[30px] overflow-visible">{task.art}</svg>
            ) : (
              <ComposerLogo className="size-[30px]" />
            )}
            {task.state && (
              <span className={clsx('absolute bottom-0 flex h-[3px] justify-end bg-[#7cc0ff]', task.state === 'active' ? 'inset-x-0' : 'inset-x-[5px]')}>
                {task.state === 'stacked' && <span className="w-[11px] border-l border-[#2c4457] bg-[#5f97c6]" />}
              </span>
            )}
          </button>
        ))}
      </div>
      <div className="flex items-center pr-[5px]">
        <button className="flex items-center gap-[11px] text-base">
          <svg viewBox="0 0 26 26" className="size-[26px]" aria-hidden="true">
            <circle cx="12" cy="12" r="11" fill="#f9a91c" />
            <path d="M6 25a6 6 0 0 1 0-11c1-6 11-7 13 0 8 0 9 10 1 11z" fill="#cfe6fa" />
          </svg>
          91°F
        </button>
        <button aria-label="Hidden icons" className="flex w-[66px] justify-end pr-[21px]">
          <svg viewBox="0 0 16 10" className="w-4" fill="none" stroke="#fff" strokeWidth="1.300"><path d="m0 9 8-8 8 8" /></svg>
        </button>
        <button aria-label="OneDrive">
          <svg viewBox="0 0 22 15" className="w-[22px]">
            <path d="M5 13A6 6 0 0 1 6 3c4-5 11-3 12 3l2 5z" fill="#0a64bd" />
            <path d="M4 14a4.500 4.500 0 0 1 0-9c4-1 7 1 9 4l-2 5z" fill="#1482d4" />
            <path d="M4 14 13 8c3-3 8 0 8 3s-2 3.500-4 3.500H5z" fill="#2aa5ea" />
          </svg>
        </button>
        <button className="flex w-[102px] flex-col items-center text-sm leading-[23px]">
          <span>12:49 PM</span>
          <span>6/21/2021</span>
        </button>
        <button aria-label="Notifications" className="flex w-[32px] justify-center">
          <svg viewBox="0 0 22 20" className="w-[22px]">
            <path d="M1 0h20v17h-4v3l-4-3H1z" fill="#fff" />
            <path d="M5 5h12M5 9h12M5 13h7" stroke="#202d39" strokeWidth="1.300" />
            <path d="M19 11a5 5 0 0 1-7 6 5 5 0 1 0 7-6z" fill="#fff" stroke="#202d39" />
          </svg>
        </button>
        <span className="ml-[19px] h-[50px] border-l border-[#7a828a]" />
      </div>
    </div>
  );
};

// Numbered steps drawn over the window
const Steps = () => (
  <div className="pointer-events-none font-[Roboto,sans-serif] text-[40px] leading-10 font-medium text-[#ed1c24]">
    <span className="absolute left-[174px] top-[842px]">1</span>
    <svg viewBox="0 0 44 57" className="absolute left-[161px] top-[899px] w-11" fill="#ed1c24"><path d="M10 0h24v26h10L22 57 0 26h10z" /></svg>
    <span className="absolute left-[25px] top-[258px]">2</span>
    <svg viewBox="0 0 58 34" className="absolute left-14 top-[261px] w-[58px]" fill="#ed1c24"><path d="M0 7h26V0l5 0 27 17-27 17h-5v-7H0z" /></svg>
    <span className="absolute left-[1150px] top-[402px]">3</span>
    <svg viewBox="0 0 86 34" className="absolute left-[1057px] top-[405px] w-[86px]" fill="#ed1c24"><path d="M86 7H45V0h-4L0 17l41 17h4v-7h41z" /></svg>
    <span className="absolute left-[1685px] top-[738px]">4</span>
    <svg viewBox="0 0 68 41" className="absolute left-[1606px] top-[735px] w-[68px]" fill="#ed1c24"><path d="M68 9H35V0h-3L0 20l32 21h3v-9h33z" /></svg>
  </div>
);

const App = () => (
  <div className="relative flex h-screen flex-col overflow-hidden bg-[#f0f0f0] font-['Liberation_Sans',Arial,sans-serif] text-[13px] leading-5 text-black">
    <TitleBar />
    <MenuBar />
    <div className="flex min-h-0 flex-1 gap-[5px] px-[5px] pb-1.5">
      <Sidebar />
      <Workspace />
    </div>
    <StatusBar />
    <Taskbar />
    <Steps />
  </div>
);

export default App;
